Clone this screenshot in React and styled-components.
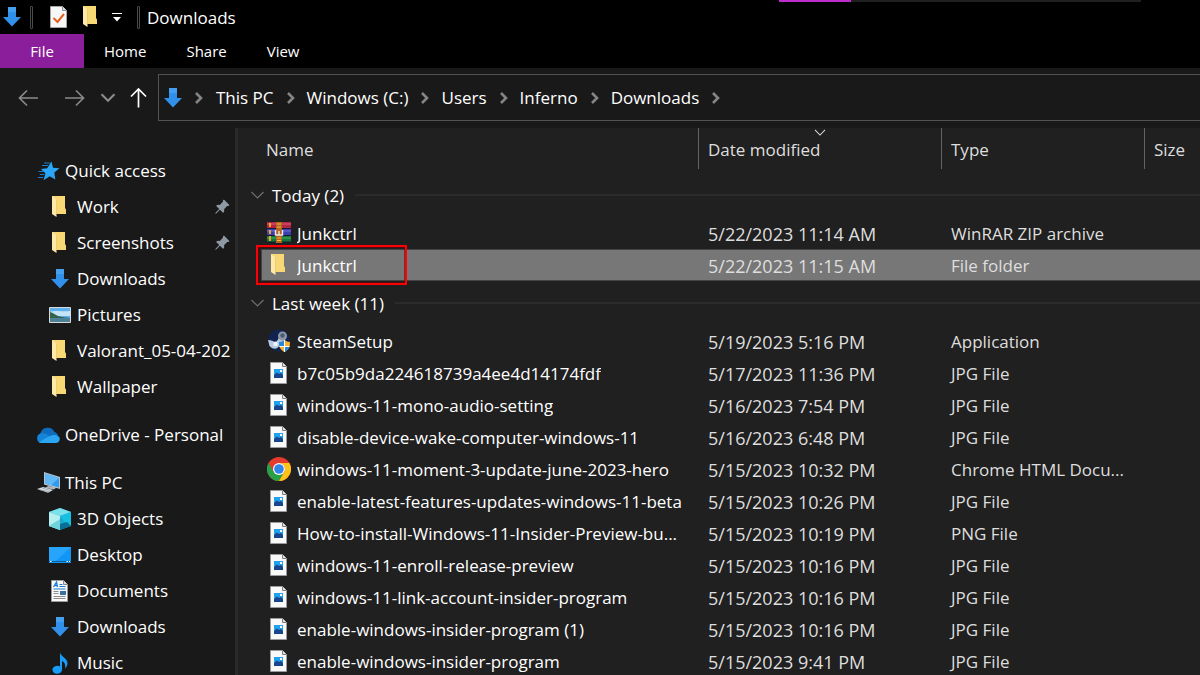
import React, { useState } from "react";
import styled, { createGlobalStyle, css } from "styled-components";
import { BsPinAngleFill } from "react-icons/bs";

const black = "#000000";
const panel = "#191919";
const content = "#202020";
const outline = "#535353";
const muted = "#8a8a8a";
const white = "#ffffff";
const silver = "#dedede";
const purple = "#8b1f9b";
const magenta = "#c02bcc";
const red = "#fb0007";

const GlobalStyle = createGlobalStyle`
  body {
    margin: 0;
    background: ${content};
  }
  * {
    box-sizing: border-box;
  }
`;

const Window = styled.div`
  display: flex;
  flex-direction: column;
  height: 100vh;
  overflow: hidden;
  background: ${content};
  color: ${white};
  font-family: "Open Sans", "Noto Sans", sans-serif;
  font-size: 17px;
  line-height: 24px;

  svg {
    display: block;
    flex: none;
  }
  button {
    font: inherit;
    color: inherit;
    background: none;
    border: 0;
    padding: 0;
    margin: 0;
  }
  a {
    color: inherit;
    text-decoration: none;
  }
`;

const TitleBar = styled.header`
  position: relative;
  display: flex;
  align-items: center;
  height: 34px;
  background: ${black};
`;

const Divider = styled.span`
  width: 3px;
  height: 23px;
  margin: ${props => props.$margin};
  border: 1px solid #4a4a4a;
  border-radius: 1px;
`;

const Title = styled.h1`
  margin: 0;
  padding-top: 1px;
  font-size: 17px;
  font-weight: 400;
`;

const QuickTools = styled.div`
  display: flex;
  align-items: center;
  gap: 8px;

  button:last-child {
    padding: 0 1px;
  }
`;

const Loader = styled.div`
  position: absolute;
  top: 0;
  right: 59px;
  width: 362px;
  height: 2px;
  background: #1f1f1f;

  &::before {
    content: "";
    display: block;
    width: 20%;
    height: 100%;
    background: ${magenta};
  }
`;

const Ribbon = styled.nav`
  display: flex;
  height: 34px;
  background: ${black};
`;

const RibbonTab = styled.button`
  && {
    padding: 0 20px;
    font-size: 15px;
    ${props =>
      props.$primary &&
      css`
        width: 84px;
        background: ${purple};
      `}
  }
`;

const NavBar = styled.div`
  display: flex;
  align-items: stretch;
  height: 60px;
  padding: 6px 0 7px;
  background: ${panel};
`;

const NavButtons = styled.div`
  display: flex;
  align-items: center;
  width: 158px;
  padding: 0 10px 0 18px;
  color: ${muted};

  button:nth-child(1) {
    margin-right: 25px;
  }
  button:nth-child(2) {
    margin-right: 16px;
  }
  button:nth-child(3) {
    margin-right: 13px;
  }
  button:last-child {
    color: ${white};
  }
`;

const AddressBar = styled.ol`
  flex: 1;
  display: flex;
  align-items: center;
  margin: 0;
  padding: 0 0 0 2px;
  list-style: none;
  border: 1px solid ${outline};
  border-right: 0;

  li {
    display: flex;
    align-items: center;
  }
  li > svg:last-child {
    margin: 0 12px 0 13px;
  }
  li:first-child > svg:last-child {
    margin: 0 13px 0 10px;
  }
`;

const Body = styled.div`
  flex: 1;
  display: flex;
  min-height: 0;
`;

const Sidebar = styled.nav`
  flex: none;
  width: 238px;
  padding-top: 25px;
  overflow: hidden;
  background: ${panel};
  border-right: 3px solid #2a2a2a;
`;

const Tree = styled.ul`
  margin: 0 0 12px;
  padding: 0;
  list-style: none;
`;

const TreeItem = styled.a`
  display: flex;
  align-items: center;
  gap: 5px;
  height: 36px;
  padding: 0 5px 0 ${props => (props.$nested ? 48 : 36)}px;
  white-space: nowrap;

  span {
    flex: 1;
  }
  span + svg {
    color: #8f99a3;
  }
`;

const Main = styled.main`
  flex: 1;
  min-width: 0;
  padding-left: 13px;
`;

const FileTable = styled.table`
  width: 100%;
  table-layout: fixed;
  border-collapse: separate;
  border-spacing: 0;

  th,
  td {
    padding: 0;
    text-align: left;
    font-weight: 400;
    white-space: nowrap;
  }
`;

const Col = styled.col`
  width: ${props => props.$width}px;
`;

const HeadCell = styled.th`
  position: relative;
  height: 45px;
  vertical-align: top;
  color: ${silver};

  > span {
    display: flex;
    align-items: center;
    height: 41px;
    padding: 2px 0 0 9px;
    border-left: 1px solid #636363;
  }
  &:first-child > span {
    padding-left: 14px;
    border-color: transparent;
  }
  > svg {
    position: absolute;
    top: 1px;
    left: 50%;
    transform: translateX(-50%);
  }
`;

const GroupToggle = styled.button`
  && {
    display: flex;
    align-items: center;
    width: 100%;
    height: 44px;
  }
  svg {
    margin-right: 8px;
    color: #6f6f6f;
  }
  span {
    padding-top: 2px;
  }
  &::after {
    content: "";
    flex: 1;
    height: 2px;
    margin-left: 11px;
    background: #2b2b2b;
  }
`;

const Row = styled.tr`
  && td {
    height: 32px;
    padding: 2px 0 0 10px;
    color: ${silver};
    background-clip: padding-box;
  }
  && td:first-child {
    position: relative;
    padding: 0 0 0 6px;
    border-left: 10px solid transparent;
    color: ${white};
  }
  && td:nth-child(2) {
    font-size: 18px;
  }
  ${props =>
    props.$selected &&
    css`
      td {
        background-color: #777777;
        box-shadow: inset 0 1px #434343, inset 0 -1px #434343;
      }
      td:first-child {
        box-shadow: inset 1px 1px #434343, inset 0 -1px #434343;
      }
    `}
`;

const FileName = styled.span`
  display: flex;
  align-items: center;
  gap: 6px;
  padding-right: 8px;

  span {
    padding-top: 2px;
    overflow: hidden;
    text-overflow: ellipsis;
  }
`;

const Highlight = styled.span`
  position: absolute;
  top: -4px;
  left: -5px;
  width: 151px;
  height: 40px;
  border: 2px solid ${red};
  box-shadow: inset 0 0 0 1px rgba(110, 0, 0, 0.6);
`;

const Icon = ({ size = 24, children }) => (
  <svg width={size} height={size} viewBox="0 0 24 24" aria-hidden="true">
    {children}
  </svg>
);

const DownArrow = () => (
  <Icon>
    <path d="M8 2h8v10h5l-9 9.500-9-9.500h5z" fill="#3090ea" />
    <path d="M8 2h8v5H8z" fill="#45a0ef" />
  </Icon>
);

const Folder = () => (
  <Icon>
    <path d="M4 1h13v12l1 1.500V19H7z" fill="#f8d775" />
    <path d="M4 1l4.500 3.500V22L4 19z" fill="#ffe9a8" />
    <path d="M8.500 4.500V19" stroke="#e5bd58" strokeWidth="0.600" />
  </Icon>
);

const CheckedPage = () => (
  <Icon>
    <path d="M3.500 1.500h12l4 4v17h-16z" fill="#f7f7f7" stroke="#a5a5a5" />
    <path d="M15.500 1.500v4h4" fill="#dcdcdc" stroke="#8d8d8d" />
    <path d="M6.500 13l4 4L17 9" fill="none" stroke="#e8601c" strokeWidth="2" />
  </Icon>
);

const MoreCaret = () => (
  <svg width="10" height="10" viewBox="0 0 10 10" aria-hidden="true">
    <path d="M1 5h8L5 9.500z" fill="#fff" />
    <path d="M0 1.500h10" stroke="#fff" />
  </svg>
);

const Arrow = ({ turn = 0 }) => (
  <svg width="21" height="20" viewBox="0 0 21 20" aria-hidden="true">
    <path
      d="M20 10H1.500M9 2.500L1.500 10 9 17.500"
      transform={`rotate(${turn} 10.500 10)`}
      fill="none"
      stroke="currentColor"
      strokeWidth="1.700"
    />
  </svg>
);

const Chevron = ({ width = 13, height = 8, weight = 1.2 }) => (
  <svg width={width} height={height} viewBox="0 0 13 8" aria-hidden="true">
    <path
      d="M0.500 1l6 6 6-6"
      fill="none"
      stroke="currentColor"
      strokeWidth={weight}
    />
  </svg>
);

const Crumb = () => (
  <svg width="8" height="12" viewBox="0 0 8 12" aria-hidden="true">
    <path d="M1 1l5 5-5 5" fill="none" stroke="#858585" strokeWidth="2.600" />
  </svg>
);

const Star = () => (
  <Icon>
    <path
      d="M15.500 2.500L17 8.800l6.500.4-5.200 4.300 1 7-5.600-3.300-6.200 4 2-6.800L5 10l6.200-.8z"
      fill="#2aa6f8"
    />
    <path
      d="M8 4h6M6 6.500h6M2.500 12.500h6M4 15.500h4.500M2 18.500h5"
      stroke="#1c7cc8"
    />
  </Icon>
);

const Picture = () => (
  <Icon>
    <path d="M2 5h20v14H2z" fill="#5db1ee" />
    <path d="M2 9c5-2 9 0 20-1v5H2z" fill="#c4e3f7" />
    <path d="M2 9c4 1 6 4 12 5l8 1H2z" fill="#36614a" />
    <path d="M2 15h20v4H2z" fill="#4a8196" />
    <path d="M1.500 4.500h21v15h-21z" fill="none" stroke="#dadada" />
  </Icon>
);

const Cloud = () => (
  <Icon>
    <path
      d="M5 20a5 5 0 0 1-.6-9.500A7.500 7.500 0 0 1 18.500 9 6 6 0 0 1 19 20z"
      fill="#0f6cbd"
    />
    <path d="M5 20a5 5 0 0 1-.4-9.500c4-1 7 1 9.500 3L5 20z" fill="#1484d8" />
    <path
      d="M3 19.500c3-2.500 8-5 12-7 2.500-1 6-.8 8.200 1.500A4 4 0 0 1 20 20H5c-1 0-1.500-.2-2-.5z"
      fill="#2ba5ef"
    />
  </Icon>
);

const Computer = () => (
  <Icon>
    <path d="M8 1l16 5v12L8 13.500z" fill="#b9c4cc" />
    <path d="M9.200 2.500L23 7v9.500L9.200 12.500z" fill="#2d9bf0" />
    <path d="M9.200 2.500L23 7l-8 7.200-5.800-1.700z" fill="#62b8f7" />
    <path d="M12 15l9 1-3 2.500-9-1.500z" fill="#aeb6bc" />
    <path d="M1 18l6-2 10 3-5 2.800z" fill="#dce1e4" />
    <path d="M3 18.500l10 2.300M6 17l8 2.400" stroke="#8b949a" strokeWidth=".7" />
  </Icon>
);

const Cube = () => (
  <Icon>
    <path d="M12 1l11 4v14l-11 4-11-4V5z" fill="#1fa8cf" />
    <path d="M12 1l11 4-11 4L1 5z" fill="#7be0ea" />
    <path d="M1 5l11 4v14L1 19z" fill="#b5eff0" />
    <path d="M12 12v11L1 19z" fill="#6fd3dc" />
    <path d="M12 9l11-4v14l-4-1.500z" fill="#17bfe0" />
    <path d="M12 17l7-2 4 4-11 4z" fill="#0a6e96" />
  </Icon>
);

const Monitor = () => (
  <Icon>
    <path d="M1 4h22v16H1z" fill="#1196f5" />
    <path d="M1 4h22L8 18H1z" fill="#27a4fb" />
    <path d="M1 18.500h22" stroke="#0d5e9e" />
    <path d="M2 18.500h1.500M18.500 18.500H20M21 18.500h1" stroke="#fff" />
  </Icon>
);

const DocumentPage = () => (
  <Icon>
    <path d="M3.500 1.500h12l4 4v17h-16z" fill="#fafafa" stroke="#9c9c9c" />
    <path d="M15.500 1.500v4h4" fill="#ddd" stroke="#888" />
    <path d="M5.500 8l3-5 1 5M7 6.500h2" fill="none" stroke="#1a7bd2" strokeWidth="1.300" />
    <path d="M11.500 5.500h3M11.500 7.500h6M5.500 10h12" stroke="#1a7bd2" />
    <path d="M5.500 12.500h5M5.500 14.500h5M5.500 17.500h12M5.500 19.500h12" stroke="#8c8c8c" />
    <path d="M12 12h6v4h-6z" fill="#3a6e9c" />
  </Icon>
);

const Note = () => (
  <Icon>
    <path
      d="M12 1c0 4 7.500 6 7.500 11 0 2.500-1 4-2.500 5.500.8-3.500 0-6-3-7.500v9a4.800 4 0 1 1-2-3.500z"
      fill="#189cf8"
    />
  </Icon>
);

const Archive = () => (
  <Icon>
    <path d="M0 1h24v6H0z" fill="#b32543" />
    <path d="M0 8h24v6H0z" fill="#3c3fae" />
    <path d="M0 15h24v6H0z" fill="#13783a" />
    <path d="M0 3h24" stroke="#de5f80" />
    <path d="M0 10h24" stroke="#6f73dc" />
    <path d="M0 17h24" stroke="#3eb064" />
    <path d="M0 7.500h24M0 14.500h24M0 21h24" stroke="#181a36" />
    <path d="M2 2h2v4H2zM2 9h2v4H2zM2 15h2v5H2z" fill="#f0a727" />
    <path d="M9 1h6v21H9z" fill="#b5641f" />
    <path d="M10 3h4M10 6h4M10 17h4M10 19.500h4" stroke="#f3b93a" strokeWidth="1.200" />
    <path d="M8.500 9v5h7V9M12 10v4" fill="none" stroke="#e9e9e9" strokeWidth="1.400" />
  </Icon>
);

const Steam = () => (
  <Icon>
    <circle cx="12" cy="11.500" r="11" fill="#12234f" />
    <path d="M1 11c4 0 7 3 9 1l3-5 5 4-6 6c-2 4-7 3-9.500 0z" fill="#b9cbe2" />
    <circle cx="15.500" cy="7" r="4.500" fill="#8d98a8" />
    <circle cx="15.500" cy="6.500" r="2.200" fill="#4d5b72" />
    <circle cx="8.500" cy="15" r="2.200" fill="#eef3f9" />
    <path d="M12 13c2.500 0 4-1 5.500-2 1.500 1 3 2 5.500 2 0 5-1.500 8-5.500 10-4-2-5.500-5-5.500-10z" fill="#f6b22c" />
    <path d="M12 13c2.500 0 4-1 5.500-2v6.500h-5c-.4-1.300-.5-2.800-.5-4.500zM17.500 17.500h5c-.8 2.500-2.500 4.400-5 5.500z" fill="#2486dd" />
    <path d="M17.500 11v12M12.300 17.500h10.400" stroke="#fff" />
  </Icon>
);

const ImagePage = () => (
  <Icon>
    <path d="M3.500 1.500h12l4 4v17h-16z" fill="#f9f9f9" stroke="#9b9b9b" />
    <path d="M15.500 1.500v4h4" fill="#e2e2e2" stroke="#7d7d7d" />
    <path d="M7 8h9v9H7z" fill="#24a1ec" />
    <path d="M7 14l3-2.500 2 1.500 2-1 2 2v3H7z" fill="#17468f" />
    <path d="M13 9h2v2h-2z" fill="#fff" />
  </Icon>
);

const Chrome = () => (
  <Icon>
    <circle cx="12" cy="12" r="12" fill="#e33b2e" />
    <path d="M1.600 6A12 12 0 0 0 12 24l5.200-9-5.200 3-5.200-3z" fill="#28a146" />
    <path d="M22.400 6A12 12 0 0 1 12 24l5.200-9A6 6 0 0 0 12 6z" fill="#fdc418" />
    <circle cx="12" cy="12" r="6" fill="#fff" />
    <circle cx="12" cy="12" r="4.800" fill="#2f86ea" />
  </Icon>
);

const icons = {
  star: Star,
  folder: Folder,
  download: DownArrow,
  picture: Picture,
  cloud: Cloud,
  computer: Computer,
  cube: Cube,
  monitor: Monitor,
  document: DocumentPage,
  note: Note,
  archive: Archive,
  steam: Steam,
  image: ImagePage,
  chrome: Chrome
};

const tabs = ["File", "Home", "Share", "View"];

const crumbs = ["This PC", "Windows (C:)", "Users", "Inferno", "Downloads"];

const places = [
  {
    name: "Quick access",
    icon: "star",
    items: [
      { name: "Work", icon: "folder", pinned: true },
      { name: "Screenshots", icon: "folder", pinned: true },
      { name: "Downloads", icon: "download" },
      { name: "Pictures", icon: "picture" },
      { name: "Valorant_05-04-202", icon: "folder" },
      { name: "Wallpaper", icon: "folder" }
    ]
  },
  { name: "OneDrive - Personal", icon: "cloud", items: [] },
  {
    name: "This PC",
    icon: "computer",
    items: [
      { name: "3D Objects", icon: "cube" },
      { name: "Desktop", icon: "monitor" },
      { name: "Documents", icon: "document" },
      { name: "Downloads", icon: "download" },
      { name: "Music", icon: "note" }
    ]
  }
];

const groups = [
  {
    label: "Today (2)",
    files: [
      ["archive", "Junkctrl", "5/22/2023 11:14 AM", "WinRAR ZIP archive"],
      ["folder", "Junkctrl", "5/22/2023 11:15 AM", "File folder"]
    ]
  },
  {
    label: "Last week (11)",
    files: [
      ["steam", "SteamSetup", "5/19/2023 5:16 PM", "Application"],
      ["image", "b7c05b9da224618739a4ee4d14174fdf", "5/17/2023 11:36 PM", "JPG File"],
      ["image", "windows-11-mono-audio-setting", "5/16/2023 7:54 PM", "JPG File"],
      ["image", "disable-device-wake-computer-windows-11", "5/16/2023 6:48 PM", "JPG File"],
      ["chrome", "windows-11-moment-3-update-june-2023-hero", "5/15/2023 10:32 PM", "Chrome HTML Docu..."],
      ["image", "enable-latest-features-updates-windows-11-beta", "5/15/2023 10:26 PM", "JPG File"],
      ["image", "How-to-install-Windows-11-Insider-Preview-bu...", "5/15/2023 10:19 PM", "PNG File"],
      ["image", "windows-11-enroll-release-preview", "5/15/2023 10:16 PM", "JPG File"],
      ["image", "windows-11-link-account-insider-program", "5/15/2023 10:16 PM", "JPG File"],
      ["image", "enable-windows-insider-program (1)", "5/15/2023 10:16 PM", "JPG File"],
      ["image", "enable-windows-insider-program", "5/15/2023 9:41 PM", "JPG File"]
    ]
  }
];

const Place = ({ place, nested }) => {
  const PlaceIcon = icons[place.icon];
  return (
    <li>
      <TreeItem href="#" $nested={nested}>
        <PlaceIcon />
        <span>{place.name}</span>
        {place.pinned && <BsPinAngleFill size={16} />}
      </TreeItem>
    </li>
  );
};

const FileRow = ({ file, selected, onSelect }) => {
  const [icon, name, date, type] = file;
  const FileIcon = icons[icon];
  return (
    <Row $selected={selected} onClick={onSelect}>
      <td>
        <FileName>
          <FileIcon />
          <span>{name}</span>
        </FileName>
        {selected && <Highlight />}
      </td>
      <td>{date}</td>
      <td>{type}</td>
      <td />
    </Row>
  );
};

const App = () => {
  const [selected, setSelected] = useState("0-1");
  const [closed, setClosed] = useState({});

  const toggle = label =>
    setClosed(state => ({ ...state, [label]: !state[label] }));

  return (
    <Window>
      <GlobalStyle />
      <TitleBar>
        <DownArrow />
        <Divider $margin="0 14px 0 6px" />
        <QuickTools>
          <button aria-label="Properties">
            <CheckedPage />
          </button>
          <button aria-label="New folder">
            <Folder />
          </button>
          <button aria-label="Customize toolbar">
            <MoreCaret />
          </button>
        </QuickTools>
        <Divider $margin="0 7px 0 14px" />
        <Title>Downloads</Title>
        <Loader />
      </TitleBar>
      <Ribbon>
        {tabs.map(tab => (
          <RibbonTab key={tab} $primary={tab === "File"}>
            {tab}
          </RibbonTab>
        ))}
      </Ribbon>
      <NavBar>
        <NavButtons>
          <button aria-label="Back">
            <Arrow />
          </button>
          <button aria-label="Forward">
            <Arrow turn={180} />
          </button>
          <button aria-label="Recent locations">
            <Chevron width={14} height={9} weight={2} />
          </button>
          <button aria-label="Up">
            <Arrow turn={90} />
          </button>
        </NavButtons>
        <AddressBar>
          <li>
            <DownArrow />
            <Crumb />
          </li>
          {crumbs.map(crumb => (
            <li key={crumb}>
              <a href="#">{crumb}</a>
              <Crumb />
            </li>
          ))}
        </AddressBar>
      </NavBar>
      <Body>
        <Sidebar>
          {places.map(place => (
            <Tree key={place.name}>
              <Place place={place} />
              {place.items.map(item => (
                <Place key={item.name} place={item} nested />
              ))}
            </Tree>
          ))}
        </Sidebar>
        <Main>
          <FileTable>
            <colgroup>
              <Col $width={447} />
              <Col $width={243} />
              <Col $width={203} />
              <col />
            </colgroup>
            <thead>
              <tr>
                <HeadCell>
                  <span>Name</span>
                </HeadCell>
                <HeadCell>
                  <span>Date modified</span>
                  <Chevron width={11} height={7} />
                </HeadCell>
                <HeadCell>
                  <span>Type</span>
                </HeadCell>
                <HeadCell>
                  <span>Size</span>
                </HeadCell>
              </tr>
            </thead>
            {groups.map((group, g) => (
              <tbody key={group.label}>
                <tr>
                  <td colSpan="4">
                    <GroupToggle onClick={() => toggle(group.label)}>
                      <Chevron />
                      <span>{group.label}</span>
                    </GroupToggle>
                  </td>
                </tr>
                {!closed[group.label] &&
                  group.files.map((file, f) => (
                    <FileRow
                      key={f}
                      file={file}
                      selected={selected === `${g}-${f}`}
                      onSelect={() => setSelected(`${g}-${f}`)}
                    />
                  ))}
              </tbody>
            ))}
          </FileTable>
        </Main>
      </Body>
    </Window>
  );
};

export default App;
